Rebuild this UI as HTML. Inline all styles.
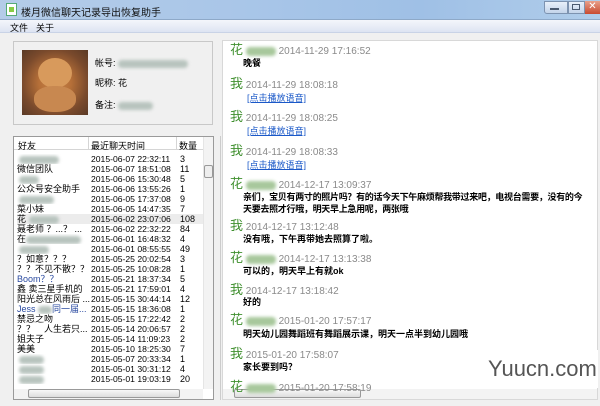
<!DOCTYPE html>
<html><head><meta charset="utf-8"><style>
*{margin:0;padding:0;box-sizing:border-box}
body{width:600px;height:406px;overflow:hidden;background:#f0f0f0;font-family:"Liberation Sans","Noto Sans CJK SC",sans-serif;font-size:10px;position:relative;color:#000}
.a{position:absolute;white-space:nowrap}
.title{left:0;top:0;width:600px;height:20px;background:linear-gradient(90deg,#b4cce8,#a9c6e8 40%,#9fc0e6 70%,#b0cdea);border-bottom:1px solid #8ea9c8}
.menu{left:0;top:20px;width:600px;height:13px;background:linear-gradient(#f4f6fb,#dde4f2);border-bottom:1px solid #c9d3e6}
.blur{display:inline-block;height:8px;background:#b8c4be;border-radius:4px;filter:blur(1.5px);vertical-align:middle}
.gb{background:#a8c89c}
.nm{color:#3f8f2e;font-size:13px}
.dt{color:#8a8a8a;font-size:10px}
.msg{font-size:9px;font-weight:bold}
.lnk{color:#1a58c8;text-decoration:underline;font-size:9px}
.row{position:absolute;left:17px;width:186px;height:10px;font-size:9px;line-height:10px;overflow:hidden}
.row span{position:absolute}
.row span:nth-child(2){font-size:8.6px}
</style></head><body>
<div class="a title"></div>
<div class="a" style="left:6px;top:3px;width:11px;height:13px;background:#fff;border:1px solid #5a7;"><div style="margin:3px 2px;width:5px;height:5px;background:#8c4"></div></div>
<div class="a" style="left:21px;top:4px;font-size:10px;color:#111">楼月微信聊天记录导出恢复助手</div>
<div class="a" style="left:544px;top:1px;width:24px;height:13px;border:1px solid #7d93b0;border-radius:0 0 0 3px;background:linear-gradient(#e8f0fa,#c3d4ea)"></div>
<div class="a" style="left:550px;top:8px;width:9px;height:2px;background:#4a5a70"></div>
<div class="a" style="left:568px;top:1px;width:17px;height:13px;border:1px solid #7d93b0;background:linear-gradient(#e8f0fa,#c3d4ea)"></div>
<div class="a" style="left:572px;top:4px;width:8px;height:6px;border:1px solid #4a5a70"></div>
<div class="a" style="left:585px;top:1px;width:15px;height:13px;background:linear-gradient(#e8a08a,#c84a30);color:#fff;font-size:10px;text-align:center;line-height:12px">✕</div>
<div class="a menu"></div>
<div class="a" style="left:10px;top:21px;font-size:9px">文件</div>
<div class="a" style="left:36px;top:21px;font-size:9px">关于</div>
<div class="a" style="left:13px;top:41px;width:200px;height:84px;border:1px solid #c8c8c8;background:#f0f0f0"></div>
<div class="a" style="left:22px;top:50px;width:66px;height:65px;background:radial-gradient(circle at 50% 50%,#c8844a 0,#b56f38 35%,#7a4a2c 70%,#5a3a26 100%)"></div>
<div class="a" style="left:38px;top:58px;width:34px;height:30px;border-radius:50%;background:#d89a5c"></div>
<div class="a" style="left:34px;top:86px;width:42px;height:26px;border-radius:45%;background:#c88850"></div>
<div class="a" style="left:95px;top:56px;font-size:9px">帐号: <span class="blur" style="width:70px"></span></div>
<div class="a" style="left:95px;top:76px;font-size:9px">昵称: 花</div>
<div class="a" style="left:95px;top:98px;font-size:9px">备注: <span class="blur" style="width:35px"></span></div>
<div class="a" style="left:13px;top:136px;width:201px;height:264px;border:1px solid #9a9a9a;background:#fff"></div>
<div class="a" style="left:14px;top:137px;width:189px;height:13px;background:#fff;border-bottom:1px solid #d5d5d5"></div>
<div class="a" style="left:88px;top:137px;width:1px;height:13px;background:#d5d5d5"></div>
<div class="a" style="left:176px;top:137px;width:1px;height:13px;background:#d5d5d5"></div>
<div class="a" style="left:18px;top:139px;font-size:9px">好友</div>
<div class="a" style="left:91px;top:139px;font-size:9px">最近聊天时间</div>
<div class="a" style="left:179px;top:139px;font-size:9px">数量</div>
<div class="a" style="left:203px;top:137px;width:10px;height:252px;background:#f3f3f3;border-left:1px solid #e5e5e5"></div>
<div class="a" style="left:204px;top:165px;width:9px;height:13px;border:1px solid #999;border-radius:2px;background:#eee"></div>
<div class="a" style="left:14px;top:389px;width:189px;height:10px;background:#f3f3f3"></div>
<div class="a" style="left:28px;top:389px;width:152px;height:9px;border:1px solid #999;border-radius:2px;background:linear-gradient(#f8f8f8,#ddd)"></div>
<div class="a" style="left:220px;top:136px;width:1px;height:264px;background:#ccc"></div>
<div class="row" style="top:154px"><span style="left:2px"><i class="blur" style="width:40px"></i></span><span style="left:74px">2015-06-07 22:32:11</span><span style="left:163px">3</span></div>
<div class="row" style="top:164px"><span>微信团队</span><span style="left:74px">2015-06-07 18:51:08</span><span style="left:163px">11</span></div>
<div class="row" style="top:174px"><span style="left:2px"><i class="blur" style="width:20px"></i></span><span style="left:74px">2015-06-06 15:30:48</span><span style="left:163px">5</span></div>
<div class="row" style="top:184px"><span>公众号安全助手</span><span style="left:74px">2015-06-06 13:55:26</span><span style="left:163px">1</span></div>
<div class="row" style="top:194px"><span style="left:2px"><i class="blur" style="width:35px"></i></span><span style="left:74px">2015-06-05 17:37:08</span><span style="left:163px">9</span></div>
<div class="row" style="top:204px"><span>菜小妹</span><span style="left:74px">2015-06-05 14:47:35</span><span style="left:163px">7</span></div>
<div class="row" style="top:214px;background:#ececec"><span>花 <i class="blur" style="width:30px"></i></span><span style="left:74px">2015-06-02 23:07:06</span><span style="left:163px">108</span></div>
<div class="row" style="top:224px"><span>聂老师 ？...？ ...</span><span style="left:74px">2015-06-02 22:32:22</span><span style="left:163px">84</span></div>
<div class="row" style="top:234px"><span>在<i class="blur" style="width:55px"></i></span><span style="left:74px">2015-06-01 16:48:32</span><span style="left:163px">4</span></div>
<div class="row" style="top:244px"><span style="left:2px"><i class="blur" style="width:30px"></i></span><span style="left:74px">2015-06-01 08:55:55</span><span style="left:163px">49</span></div>
<div class="row" style="top:254px"><span>？如意？？？</span><span style="left:74px">2015-05-25 20:02:54</span><span style="left:163px">3</span></div>
<div class="row" style="top:264px"><span>？？不见不散？？</span><span style="left:74px">2015-05-25 10:08:28</span><span style="left:163px">1</span></div>
<div class="row" style="top:274px"><span style="color:#2a4aa0">Boom？？</span><span style="left:74px">2015-05-21 18:37:34</span><span style="left:163px">5</span></div>
<div class="row" style="top:284px"><span>鑫 卖三星手机的</span><span style="left:74px">2015-05-21 17:59:01</span><span style="left:163px">4</span></div>
<div class="row" style="top:294px"><span>阳光总在风雨后 ...</span><span style="left:74px">2015-05-15 30:44:14</span><span style="left:163px">12</span></div>
<div class="row" style="top:304px"><span style="color:#2a4aa0">Jess <i class="blur" style="width:14px"></i>同一届...</span><span style="left:74px">2015-05-15 18:36:08</span><span style="left:163px">1</span></div>
<div class="row" style="top:314px"><span>禁忌之吻</span><span style="left:74px">2015-05-15 17:22:42</span><span style="left:163px">2</span></div>
<div class="row" style="top:324px"><span>？？　人生若只...</span><span style="left:74px">2015-05-14 20:06:57</span><span style="left:163px">2</span></div>
<div class="row" style="top:334px"><span>姐夫子</span><span style="left:74px">2015-05-14 11:09:23</span><span style="left:163px">2</span></div>
<div class="row" style="top:344px"><span>美美</span><span style="left:74px">2015-05-10 18:25:30</span><span style="left:163px">7</span></div>
<div class="row" style="top:354px"><span style="left:2px"><i class="blur" style="width:25px"></i></span><span style="left:74px">2015-05-07 20:33:34</span><span style="left:163px">1</span></div>
<div class="row" style="top:364px"><span style="left:2px"><i class="blur" style="width:25px"></i></span><span style="left:74px">2015-05-01 30:31:12</span><span style="left:163px">4</span></div>
<div class="row" style="top:374px"><span style="left:2px"><i class="blur" style="width:25px"></i></span><span style="left:74px">2015-05-01 19:03:19</span><span style="left:163px">20</span></div>
<div class="a" style="left:222px;top:40px;width:376px;height:360px;background:#fff;border:1px solid #d8d8d8;overflow:hidden"></div>
<div class="a" style="left:223px;top:389px;width:374px;height:10px;background:#f3f3f3"></div>
<div class="a" style="left:234px;top:389px;width:127px;height:9px;border:1px solid #999;border-radius:2px;background:linear-gradient(#f8f8f8,#ddd)"></div>
<div class="a" style="left:230px;top:39px"><span class="nm">花</span> <span class="blur gb" style="width:30px;height:9px"></span> <span class="dt">2014-11-29 17:16:52</span></div>
<div class="a msg" style="left:243px;top:56px">晚餐</div>
<div class="a" style="left:230px;top:73px"><span class="nm">我</span> <span class="dt">2014-11-29 18:08:18</span></div>
<div class="a lnk" style="left:247px;top:91px">[点击播放语音]</div>
<div class="a" style="left:230px;top:106px"><span class="nm">我</span> <span class="dt">2014-11-29 18:08:25</span></div>
<div class="a lnk" style="left:247px;top:124px">[点击播放语音]</div>
<div class="a" style="left:230px;top:140px"><span class="nm">我</span> <span class="dt">2014-11-29 18:08:33</span></div>
<div class="a lnk" style="left:247px;top:158px">[点击播放语音]</div>
<div class="a" style="left:230px;top:173px"><span class="nm">花</span> <span class="blur gb" style="width:30px;height:9px"></span> <span class="dt">2014-12-17 13:09:37</span></div>
<div class="a msg" style="left:243px;top:190px;letter-spacing:-0.3px">亲们，宝贝有两寸的照片吗？有的话今天下午麻烦帮我带过来吧，电视台需要，没有的今</div>
<div class="a msg" style="left:243px;top:202px;letter-spacing:-0.3px">天要去照才行哦，明天早上急用呢，两张哦</div>
<div class="a" style="left:230px;top:215px"><span class="nm">我</span> <span class="dt">2014-12-17 13:12:48</span></div>
<div class="a msg" style="left:243px;top:232px">没有哦，下午再带她去照算了啦。</div>
<div class="a" style="left:230px;top:247px"><span class="nm">花</span> <span class="blur gb" style="width:30px;height:9px"></span> <span class="dt">2014-12-17 13:13:38</span></div>
<div class="a msg" style="left:243px;top:264px">可以的，明天早上有就ok</div>
<div class="a" style="left:230px;top:279px"><span class="nm">我</span> <span class="dt">2014-12-17 13:18:42</span></div>
<div class="a msg" style="left:243px;top:295px">好的</div>
<div class="a" style="left:230px;top:309px"><span class="nm">花</span> <span class="blur gb" style="width:30px;height:9px"></span> <span class="dt">2015-01-20 17:57:17</span></div>
<div class="a msg" style="left:243px;top:327px">明天幼儿园舞蹈班有舞蹈展示课，明天一点半到幼儿园哦</div>
<div class="a" style="left:230px;top:343px"><span class="nm">我</span> <span class="dt">2015-01-20 17:58:07</span></div>
<div class="a msg" style="left:243px;top:360px">家长要到吗？</div>
<div class="a" style="left:230px;top:376px"><span class="nm">花</span> <span class="blur gb" style="width:30px;height:9px"></span> <span class="dt">2015-01-20 17:58:19</span></div>
<div class="a" style="left:470px;top:350px;width:128px;height:38px;background:#fff"></div>
<div class="a" style="left:488px;top:356px;font-size:22px;color:#555">Yuucn.com</div>
</body></html>
